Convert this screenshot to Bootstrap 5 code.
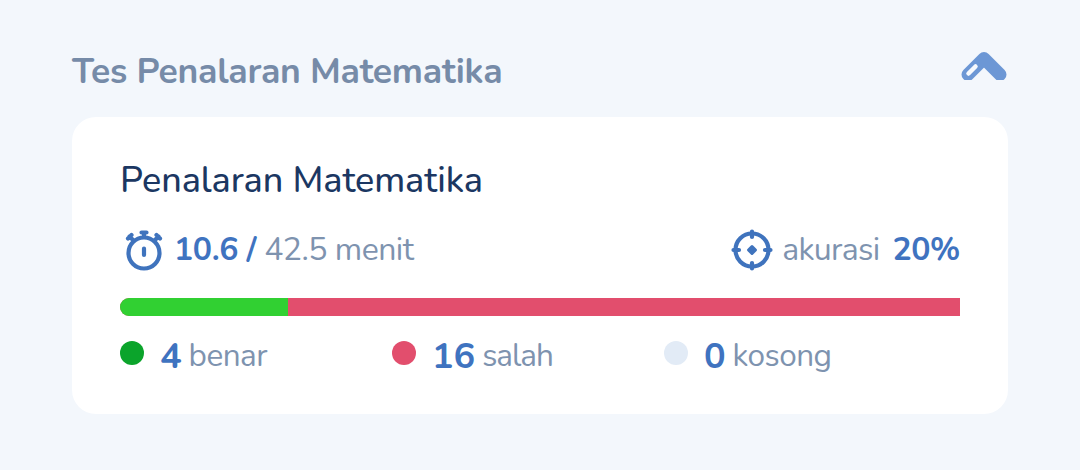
<!DOCTYPE html>
<html lang="id">
<head>
<meta charset="utf-8">
<meta name="viewport" content="width=device-width, initial-scale=1">
<title>Tes Penalaran Matematika</title>
<link href="https://cdn.jsdelivr.net/npm/bootstrap@5.3.0/dist/css/bootstrap.min.css" rel="stylesheet">
<style>
body{background:#f3f7fc;font-family:Nunito,Lato,"Open Sans",sans-serif;color:#7a8fae}
.page{padding:48px 72px 0}
.heading{height:48px;margin-bottom:21px}
.heading h1{font-size:35.500px;font-weight:700;line-height:48px;color:#768ba8;letter-spacing:-.25px}
.chevron{margin:2px 1px 0 0}
.result{border-radius:24px;height:297px;padding:40px 48px 0}
.result h2{font-size:36px;font-weight:500;line-height:48px;color:#1b3762;letter-spacing:-.08px}
.stats{height:48px;margin-top:21px;font-size:32px;line-height:48px}
.stats,.legend{color:#7e93af;white-space:nowrap}
.thin{font-weight:370;letter-spacing:-.5px}
.strong{font-weight:700;color:#3f73c0}
.stats .strong{letter-spacing:-.35px}
.stats .accuracy{letter-spacing:-.7px}
.score{height:18px;margin-top:24px;border-radius:9px 0 0 9px;background:#e24e6d}
.score .progress-bar{background:#31d032}
.legend{margin-top:15px;height:48px}
.legend>div{width:272px;height:48px}
.legend .strong{font-size:36px;line-height:48px;margin:3px 0 0 16px}
.legend .thin{font-size:31.500px;line-height:48px;margin:2px 0 0 7px}
.legend .wrong{letter-spacing:-1px}
.dot{width:24px;height:24px;margin-top:-4px}
</style>
</head>
<body>
<main class="page">
  <div class="heading d-flex justify-content-between align-items-start">
    <h1 class="mb-0 text-nowrap">Tes Penalaran Matematika</h1>
    <svg class="chevron" width="46" height="30" viewBox="0 0 46 30" fill="none" stroke-linecap="round" stroke-linejoin="round">
      <path d="M7 24.500 23 8.500 39 24.500" stroke="#6c97d5" stroke-width="13"/>
      <path d="M7.500 23.500 14.500 16.500" stroke="#f6f9fd" stroke-width="4.500"/>
    </svg>
  </div>
  <section class="card result border-0">
    <h2 class="mb-0 text-nowrap">Penalaran Matematika</h2>
    <div class="stats d-flex justify-content-between align-items-center">
      <div class="d-flex align-items-center">
        <svg width="48" height="48" viewBox="0 0 48 48" fill="none" stroke="#3f73bd" stroke-width="4.200" stroke-linecap="round" stroke-linejoin="round">
          <circle cx="24" cy="27" r="15.500"/>
          <path d="M24 22.500v6.500M21.500 6.500h5M24 7v4M9.500 10.500 13 14M8 12.500 11.500 9M38.500 10.500 35 14M36.500 9 40 12.500"/>
        </svg>
        <span class="strong" style="margin-left:6px">10.6 /</span><span class="thin ms-2">42.5 menit</span>
      </div>
      <div class="d-flex align-items-center">
        <svg width="42" height="42" viewBox="0 0 42 42" fill="none" stroke="#3f73bd" stroke-width="4.200" stroke-linecap="round" stroke-linejoin="round">
          <circle cx="21" cy="21" r="16.500"/>
          <path d="M21 2.500v5.500M21 34v5.500M2.500 21H8M34 21h5.500"/>
          <path d="M21 17.500 24.500 21 21 24.500 17.500 21Z" fill="#3f73bd" stroke-width="3"/>
        </svg>
        <span class="thin accuracy" style="margin-left:9px">akurasi</span><span class="strong" style="margin-left:13px">20%</span>
      </div>
    </div>
    <div class="progress score"><div class="progress-bar" style="width:20%"></div></div>
    <div class="legend d-flex">
      <div class="d-flex align-items-center"><i class="dot rounded-circle" style="background:#0ba42b"></i><span class="strong">4</span><span class="thin">benar</span></div>
      <div class="d-flex align-items-center"><i class="dot rounded-circle" style="background:#e24e6d"></i><span class="strong">16</span><span class="thin wrong">salah</span></div>
      <div class="d-flex align-items-center"><i class="dot rounded-circle" style="background:#e2ebf6"></i><span class="strong">0</span><span class="thin">kosong</span></div>
    </div>
  </section>
</main>
<script src="https://cdn.jsdelivr.net/npm/bootstrap@5.3.0/dist/js/bootstrap.bundle.min.js"></script>
</body>
</html>
